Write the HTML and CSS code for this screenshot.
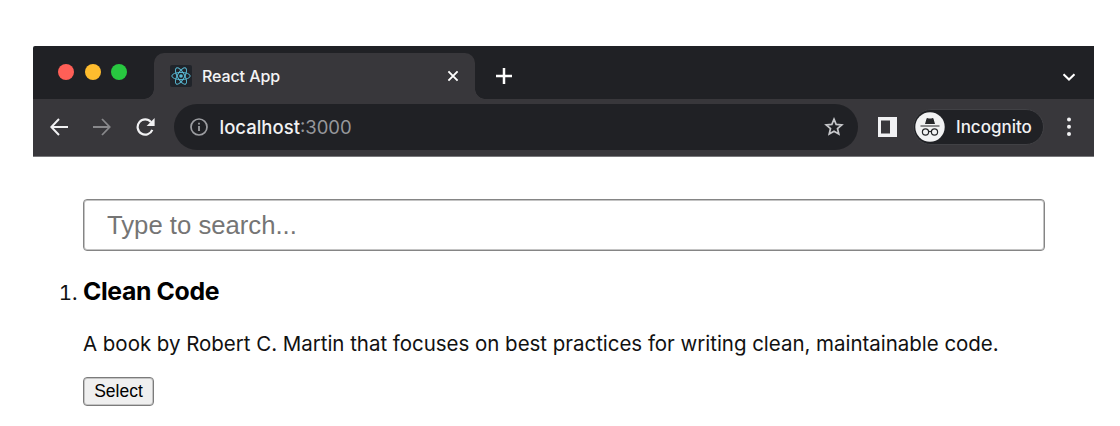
FILE: index.html
```html
<!DOCTYPE html>
<html lang="en">
<head>
<meta charset="utf-8">
<title>React App</title>
<link rel="stylesheet" href="styles.css">
</head>
<body>
<div class="browser">
  <div class="tabstrip">
    <div class="lights">
      <span class="light red"></span><span class="light yellow"></span><span class="light green"></span>
    </div>
    <div class="tab">
      <svg class="favicon" viewBox="0 0 22 22">
        <rect width="22" height="22" rx="2" fill="#20242a"/>
        <g fill="none" stroke="#58b9d3" stroke-width="1">
          <ellipse cx="11" cy="11" rx="9.2" ry="3.6"/>
          <ellipse cx="11" cy="11" rx="9.2" ry="3.6" transform="rotate(60 11 11)"/>
          <ellipse cx="11" cy="11" rx="9.2" ry="3.6" transform="rotate(120 11 11)"/>
        </g>
        <circle cx="11" cy="11" r="1.8" fill="#58b9d3"/>
      </svg>
      <span class="tab-title">React App</span>
      <svg class="close" viewBox="0 0 12 12"><path d="M1.400 1.400l9.200 9.200M10.600 1.400l-9.200 9.200" stroke="#fff" stroke-width="1.900"/></svg>
    </div>
    <svg class="plus" viewBox="0 0 16 16"><path d="M8 0v16M0 8h16" stroke="#fff" stroke-width="2.500"/></svg>
    <svg class="chevron" viewBox="0 0 14 8"><path d="M1.500 1.200L7 6.500l5.500-5.300" fill="none" stroke="#fff" stroke-width="2.100"/></svg>
  </div>
  <div class="toolbar">
    <svg class="nav" viewBox="0 0 18 18"><path d="M18 9H1.500M9 1L1.300 9 9 17" fill="none" stroke="#f1f1f3" stroke-width="2"/></svg>
    <svg class="nav" viewBox="0 0 18 18"><path d="M0 9h16.500M9 1l7.700 8L9 17" fill="none" stroke="#88888b" stroke-width="1.800"/></svg>
    <svg class="nav reload" viewBox="0 0 19 18"><path d="M16.300 11.800A7.600 7.600 0 1 1 15 4.100" fill="none" stroke="#f1f1f3" stroke-width="2.200"/><path d="M18.600 0v8h-8z" fill="#f1f1f3"/></svg>
    <div class="omnibox">
      <svg class="info" viewBox="0 0 18 18"><circle cx="9" cy="9" r="8" fill="none" stroke="#9c9da1" stroke-width="1.700"/><path d="M9 8v5M9 4.800v1.800" stroke="#9c9da1" stroke-width="1.800"/></svg>
      <span class="url">localhost<span class="port">:3000</span></span>
      <svg class="star" viewBox="0 0 20 20"><path d="M10 2.200l2.150 5.150 5.650.5-4.300 3.700 1.300 5.500L10 14.150 5.200 17.050l1.300-5.500-4.300-3.700 5.650-.5z" fill="none" stroke="#c5c6c9" stroke-width="1.700"/></svg>
    </div>
    <svg class="panel" viewBox="0 0 19 20"><path fill="#f1f1f3" fill-rule="evenodd" d="M0 0h19v20H0zM3 3.500v13h9v-13z"/></svg>
    <div class="incognito">
      <svg class="spy" viewBox="0 0 30 30">
        <circle cx="15" cy="15" r="14.700" fill="#f2f2f3"/>
        <path d="M10 12l1.500-5.200q.3-1 1.400-.6 2.100.8 4.200 0 1.100-.4 1.400.6L20 12z" fill="#26272a"/>
        <path d="M5.500 14h19" stroke="#26272a" stroke-width="1.200"/>
        <g fill="none" stroke="#26272a" stroke-width="1.200"><circle cx="10.500" cy="20" r="3.100"/><circle cx="19.500" cy="20" r="3.100"/><path d="M13.600 19.700q1.400-.8 2.800 0"/></g>
      </svg>
      <span>Incognito</span>
    </div>
    <svg class="dots" viewBox="0 0 4 20" fill="#f1f1f3"><circle cx="2" cy="2.500" r="2"/><circle cx="2" cy="9.700" r="2"/><circle cx="2" cy="16.900" r="2"/></svg>
  </div>
</div>
<main class="page">
  <input class="search" type="text" placeholder="Type to search...">
  <ol class="books">
    <li class="book">
      <h3 class="title">Clean Code</h3>
      <p class="desc">A book by Robert C. Martin that focuses on best practices for writing clean, maintainable code.</p>
      <button class="select" type="button">Select</button>
    </li>
  </ol>
</main>
</body>
</html>
```
FILE: styles.css
```css
* { box-sizing: border-box; }
body { margin: 0; padding: 46px 26px 0 33px; background: #fff; font-family: Inter, "Liberation Sans", sans-serif; }
svg { display: block; flex: none; }
.browser { height: 111px; border-radius: 2px 0 0 0; overflow: hidden; }
.tabstrip { height: 53px; padding: 7px 18px 0 25px; background: #202125; display: flex; align-items: flex-start; }
.lights { display: flex; gap: 10.500px; padding-top: 10.500px; width: 96px; }
.light { width: 16px; height: 16px; border-radius: 50%; }
.red { background: #ff5f57; }
.yellow { background: #febc2e; }
.green { background: #28c840; }
.tab { position: relative; width: 321px; height: 46px; padding: 0 16px 0 16px; background: #38373b; border-radius: 10px 10px 0 0; display: flex; align-items: center; }
.tab::before, .tab::after { content: ""; position: absolute; bottom: 0; width: 10px; height: 10px; }
.tab::before { left: -10px; background: radial-gradient(circle at 0 0, transparent 9.500px, #38373b 10px); }
.tab::after { right: -10px; background: radial-gradient(circle at 100% 0, transparent 9.500px, #38373b 10px); }
.favicon { width: 22px; height: 22px; }
.tab-title { margin-left: 10px; font-size: 16px; font-weight: 500; letter-spacing: -0.1px; color: #f4f4f5; white-space: nowrap; }
.close { width: 12px; height: 12px; margin-left: auto; }
.plus { width: 16px; height: 16px; margin: 15px 0 0 21px; }
.chevron { width: 14px; height: 8px; margin: 20px 0 0 auto; }
.toolbar { height: 58px; padding: 0 23px 1px 17px; background: #38373b; border-bottom: 1px solid #77777a; display: flex; align-items: center; }
.nav { width: 18px; height: 18px; margin-right: 25px; }
.reload { width: 19px; margin-right: 19px; }
.omnibox { width: 684px; height: 46px; padding: 0 14px 0 16px; border-radius: 23px; background: #202125; display: flex; align-items: center; }
.info { width: 18px; height: 18px; }
.url { margin-left: 11.500px; font-size: 18.500px; font-weight: 500; color: #f1f1f3; }
.port { color: #96979b; font-weight: 400; }
.star { width: 20px; height: 20px; margin-left: auto; }
.panel { width: 19px; height: 20px; margin-left: 20px; }
.incognito { width: 131px; height: 36px; margin-left: 16px; padding-left: 1px; border: 1px solid #414145; border-radius: 18px; background: #202125; display: flex; align-items: center; gap: 11px; font-size: 17px; font-weight: 500; color: #f1f1f3; }
.spy { width: 30px; height: 30px; }
.dots { width: 4px; height: 20px; margin-left: auto; }
.page { padding: 42px 23px 0 50px; display: flex; flex-direction: column; }
.search { width: 962px; height: 52px; padding: 0 23px; border: 1px solid #858585; border-radius: 4px; outline: 0; background: #fff; box-shadow: inset 0 0 0 1px #c4c4c4; font: 25.700px "Liberation Sans", Arial, sans-serif; }
.search::placeholder { color: #757575; opacity: 1; }
.books { margin: 25px 0 0; padding: 0; font-size: 20.500px; color: #111; }
.title { margin: 0; font-size: 24.800px; line-height: 31px; font-weight: 700; letter-spacing: -0.360px; color: #000; }
.desc { margin: 23px 0 0; line-height: 28px; letter-spacing: -0.030px; white-space: nowrap; }
.select { display: block; width: 71px; height: 29px; margin-top: 19px; padding: 0; border: 1px solid #7b7b7b; border-radius: 4px; background: #efefef; box-shadow: inset 0 0 0 1px #c4c4c4; color: #000; font: 17.500px "Liberation Sans", Arial, sans-serif; }
```
